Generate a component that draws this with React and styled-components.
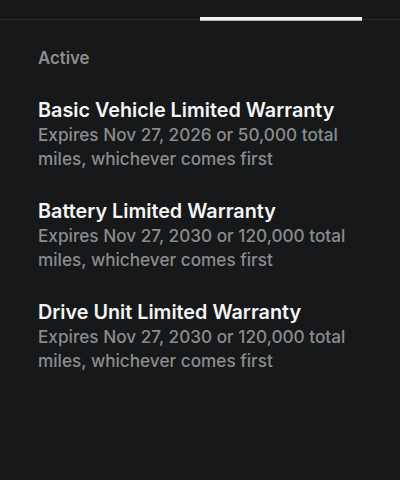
import React from "react";
import styled, { createGlobalStyle } from "styled-components";

const Global = createGlobalStyle`
  html, body { margin: 0; padding: 0; background: #161819; }
  body { font-family: Inter, "Noto Sans", sans-serif; -webkit-font-smoothing: antialiased; }
`;

const Page = styled.div`
  width: 400px;
  height: 480px;
  background: #161819;
  display: flex;
  flex-direction: column;
`;

const TabBar = styled.div`
  height: 20px;
  box-sizing: border-box;
  border-bottom: 1px solid #2a2c2e;
  display: grid;
  grid-template-columns: 200px 162px 1fr;
  align-items: end;
`;

const Indicator = styled.div`
  grid-column: 2;
  height: 4px;
  margin-bottom: -2px;
  background: linear-gradient(#f2f3f3, #f2f3f3 60%, #9a9d9f);
`;

const Content = styled.div`
  padding: 28px 38px 0;
  display: flex;
  flex-direction: column;
`;

const Section = styled.div`
  font-size: 16.8px;
  font-weight: 600;
  color: #8c8e90;
  line-height: 20px;
  margin-bottom: 30px;
`;

const List = styled.div`
  display: flex;
  flex-direction: column;
  gap: 28px;
`;

const Item = styled.div`
  display: flex;
  flex-direction: column;
`;

const Title = styled.div`
  font-size: 19.8px;
  font-weight: 600;
  color: #f4f5f5;
  line-height: 24px;
  margin-bottom: 1px;
`;

const Desc = styled.div`
  font-size: 17.2px;
  font-weight: 500;
  color: #8a8c8e;
  line-height: 24px;
  padding-right: 14px;
`;

const items = [
  { t: "Basic Vehicle Limited Warranty", d: "Expires Nov 27, 2026 or 50,000 total miles, whichever comes first" },
  { t: "Battery Limited Warranty", d: "Expires Nov 27, 2030 or 120,000 total miles, whichever comes first" },
  { t: "Drive Unit Limited Warranty", d: "Expires Nov 27, 2030 or 120,000 total miles, whichever comes first" },
];

export default function App() {
  return (
    <Page>
      <Global />
      <TabBar>
        <Indicator />
      </TabBar>
      <Content>
        <Section>Active</Section>
        <List>
          {items.map((it) => (
            <Item key={it.t}>
              <Title>{it.t}</Title>
              <Desc>{it.d}</Desc>
            </Item>
          ))}
        </List>
      </Content>
    </Page>
  );
}
